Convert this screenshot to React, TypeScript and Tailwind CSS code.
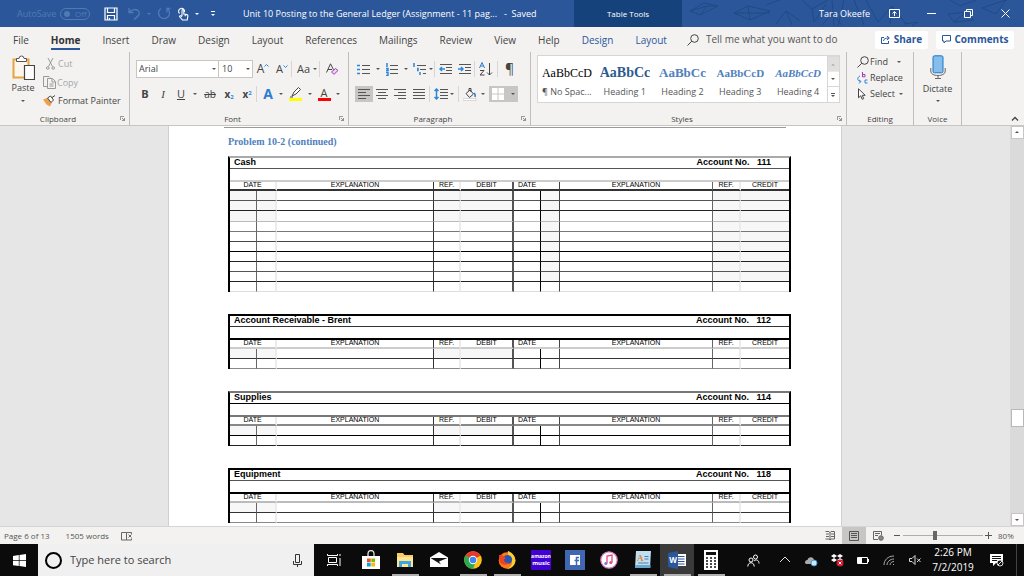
import type { ReactNode } from 'react';

const tabs = ['File', 'Home', 'Insert', 'Draw', 'Design', 'Layout', 'References', 'Mailings', 'Review', 'View', 'Help'];

const styles = [
  { name: '¶ No Spac...', sample: 'AaBbCcD', look: 'text-black text-[12px]' },
  { name: 'Heading 1', sample: 'AaBbCc', look: 'text-[#2e5b8f] text-[14px] font-bold' },
  { name: 'Heading 2', sample: 'AaBbCc', look: 'text-[#4f81bd] text-[13px] font-bold' },
  { name: 'Heading 3', sample: 'AaBbCcD', look: 'text-[#4f81bd] text-[11px] font-bold' },
  { name: 'Heading 4', sample: 'AaBbCcD', look: 'text-[#4f81bd] text-[11px] font-bold italic' },
];

export default function App() {
  return (
    <div className="flex h-screen flex-col overflow-hidden bg-[#f3f2f1] font-['Open_Sans',sans-serif] text-[#444]">
      <TitleBar />
      <TabRow />
      <Ribbon />
      <DocumentArea />
      <StatusBar />
      <Taskbar />
    </div>
  );
}

/* ───────────────────────── Title bar ───────────────────────── */

function TitleBar() {
  return (
    <header className="flex h-[27px] shrink-0 items-stretch bg-[#2b579a] text-[9px] text-white">
      <div className="flex w-[243px] shrink-0 items-center pl-[17px]">
        <label className="flex items-center gap-1 text-[#5179b5]">
          AutoSave
          <span className="flex h-3 w-[30px] items-center justify-around rounded-full border border-[#5179b5] text-[8px] leading-none">
            <input type="checkbox" className="size-[6px] appearance-none rounded-full bg-[#5179b5]" />
            Off
          </span>
        </label>
        <button aria-label="Save" className="ml-[14px]">
          <svg width="14" height="14" viewBox="0 0 14 14" fill="none" stroke="white" strokeWidth="1.2">
            <path d="M1 1h12v12H1zM3.5 1v4.5h7V1M3.5 13V8.5h7V13M5.5 11v2" />
          </svg>
        </button>
        <button aria-label="Undo" className="ml-[10px]">
          <svg width="13" height="13" viewBox="0 0 13 13" fill="none" stroke="#5179b5" strokeWidth="1.3">
            <path d="M1 1v4.5h4.5M1.2 5.2C4 2 9 1.5 10.8 4.5c1.5 3-.8 5-4.8 8" />
          </svg>
        </button>
        <Caret tone="text-[#5179b5]" width="w-4" />
        <button aria-label="Repeat">
          <svg width="14" height="13" viewBox="0 0 14 13" fill="none" stroke="#5179b5" strokeWidth="1.3">
            <path d="M4 1.5a5.5 5.5 0 1 0 6.5.3M10 5.5v-4h3.5" />
          </svg>
        </button>
        <button aria-label="Touch mode" className="ml-[6px]">
          <svg width="13" height="14" viewBox="0 0 13 14" fill="none" stroke="white" strokeWidth="1.1">
            <path d="M2.5 6.5a3 3 0 1 1 5-1.5M5 9V3.5a.9.9 0 0 1 1.8 0V7l3.2.6c.8.2 1 .6.9 1.3l-.7 4.1H5.5l-3-3.5c0-1 1.5-1 2.5.3M8.2 7.3v2" />
          </svg>
        </button>
        <Caret tone="text-white" width="w-[14px]" />
        <button aria-label="Customize toolbar" className="flex w-[18px] flex-col items-center gap-[2px]">
          <span className="h-px w-1 bg-white" />
          <Caret tone="text-white" width="w-1" />
        </button>
      </div>
      <h1 className="flex flex-1 items-center whitespace-pre">
        Unit 10 Posting to the General Ledger (Assignment - 11 pag...   -  Saved
      </h1>
      <div className="flex w-[108px] shrink-0 items-center justify-center bg-[#15427a] text-[8px]">Table Tools</div>
      <div className="relative flex w-[342px] shrink-0 items-center">
        <svg className="absolute inset-0" width="342" height="27" viewBox="0 0 342 27" fill="none" stroke="#204a86">
          <path d="M8 11 22 3l14 3-18 9zM8 11l17-5 11 0M18 15l7-9M52 13 66 6l22 5-20 9zM52 13h36M66 6l2 14M84 5l16-6M94 24l10-13 6 14M104 11l14 10M120 0l10 9 16-9M130 9l2 13 12-18M150 0l2 26M162 0l-6 26M172 0l10 25M184 0l12 22M196 22l14-16 14 18M210 6l-2 18M140 25l10-11 10 11M222 24l14-2-6 4M266 14l18-2-12 10zM284 12l8 8-20 2M268 0l10 6 16-6M300 8l24-8M300 8l14 6 10-14" />
        </svg>
        <span className="relative ml-auto pr-[6px]">Tara Okeefe</span>
        <div className="relative flex items-center">
          <WindowButton name="Ribbon display options" d="M.5.5h10v8H.5zM5.5 7V3M3.5 4.5l2-2 2 2" />
          <WindowButton name="Minimize" d="M1 4.5h9" />
          <WindowButton name="Restore" d="M1.5 2.5h6v6h-6zM3.5 2.5v-2h6v6h-2" />
          <WindowButton name="Close" d="m1.5.5 8 8M9.5.5l-8 8" />
        </div>
      </div>
    </header>
  );
}

function WindowButton({ name, d }: { name: string; d: string }) {
  return (
    <button aria-label={name} className="flex w-[37px] justify-center">
      <svg width="11" height="9" viewBox="0 0 11 9" fill="none" stroke="white">
        <path d={d} />
      </svg>
    </button>
  );
}

function Caret({ tone = 'text-[#555]', width = 'w-3' }: { tone?: string; width?: string }) {
  return (
    <span className={`flex shrink-0 justify-center ${width} ${tone}`}>
      <svg width="4" height="2" viewBox="0 0 4 2" fill="currentColor">
        <path d="M0 0h4L2 2z" />
      </svg>
    </span>
  );
}

/* ───────────────────────── Tabs ───────────────────────── */

function TabRow() {
  return (
    <nav className="flex h-[25px] shrink-0 items-center pr-[10px] pl-[13px] text-[10px]">
      <div className="flex gap-[22px]">
        {tabs.map((tab) => (
          <button
            key={tab}
            className={`h-5 border-b-2 pt-[3px] leading-[14px] ${tab === 'Home' ? 'border-[#2b579a] font-bold text-[#333]' : 'border-transparent'}`}
          >
            {tab}
          </button>
        ))}
        {['Design', 'Layout'].map((tab) => (
          <button key={tab} className="h-5 border-b-2 border-transparent pt-[3px] leading-[14px] text-[#2b579a]">
            {tab}
          </button>
        ))}
      </div>
      <label className="ml-5 flex flex-1 items-center gap-[7px]">
        <SearchIcon />
        <input
          className="w-full min-w-0 bg-transparent outline-none placeholder:text-[#555]"
          placeholder="Tell me what you want to do"
          aria-label="Tell me what you want to do"
        />
      </label>
      <button className="flex h-[18px] w-[53px] items-center justify-center gap-1 rounded-xs bg-white font-bold text-[#2b579a]">
        <svg width="9" height="9" viewBox="0 0 9 9" fill="none" stroke="currentColor">
          <path d="M3 2.5H.5v6h7V6M2.500 6C3 3.5 4.5 3 8 3M6 1l2.300 2L6 5" />
        </svg>
        Share
      </button>
      <button className="ml-2 flex h-[18px] w-[78px] items-center justify-center gap-1 rounded-xs bg-white font-bold text-[#2b579a]">
        <svg width="9" height="9" viewBox="0 0 9 9" fill="none" stroke="currentColor">
          <path d="M.5.5h8V6H4L2 8V6H.5z" />
        </svg>
        Comments
      </button>
    </nav>
  );
}

function SearchIcon() {
  return (
    <svg className="shrink-0" width="12" height="12" viewBox="0 0 12 12" fill="none" stroke="#444">
      <circle cx="7.5" cy="4.5" r="3.8" />
      <path d="M4.8 7.2.5 11.5" />
    </svg>
  );
}

/* ───────────────────────── Ribbon ───────────────────────── */

function Ribbon() {
  return (
    <div className="flex h-[74px] shrink-0 border-b border-[#c8c6c4] text-[9px]">
      <Group name="Clipboard" width="w-[130px]" launcher>
        <div className="flex pt-[3px]">
          <button className="flex w-[46px] flex-col items-center">
            <PasteIcon />
            <span className="mt-px leading-3">Paste</span>
            <span className="mt-[6px]"><Caret /></span>
          </button>
          <div className="flex flex-col">
            <button className="flex h-[18px] items-center gap-[3px] text-[#a6a6a6]">
              <svg width="9" height="12" viewBox="0 0 9 12" fill="none" stroke="#999">
                <path d="m2 0 4.5 8.5M7 0 2.5 8.5" />
                <circle cx="1.8" cy="10" r="1.3" />
                <circle cx="7.2" cy="10" r="1.3" />
              </svg>
              Cut
            </button>
            <button className="-ml-[3px] flex h-[19px] items-center gap-px text-[#a6a6a6]">
              <svg width="13" height="13" viewBox="0 0 13 13" fill="none" stroke="#999">
                <path d="M4 10.5H.5V.5H6l1 1M4.5 2.5h5l3 3v7h-8zM9 3v3h3M6.5 8h4M6.5 10h4" />
              </svg>
              Copy
            </button>
            <button className="-ml-[3px] flex h-[18px] items-center gap-[2px]">
              <svg width="13" height="12" viewBox="0 0 13 12">
                <path d="M0 4.5 4 3l5 4-2 4.5-3.5-2z" fill="#f0a04b" />
                <path d="m4.5 3 3-2 3 4L8 7.5zM9 2.5l3-2" fill="white" stroke="#444" />
              </svg>
              Format Painter
            </button>
          </div>
        </div>
      </Group>

      <Group name="Font" width="w-[219px]" launcher>
        <div className="flex h-[34px] items-center pl-[6px]">
          <label className="relative flex items-center">
            <select aria-label="Font" className="h-[18px] w-[83px] appearance-none border border-[#c8c6c4] bg-white pl-[2px] text-[9px]">
              <option>Arial</option>
            </select>
            <span className="pointer-events-none absolute right-0"><Caret width="w-[10px]" /></span>
          </label>
          <label className="relative -ml-px flex items-center">
            <select aria-label="Font size" className="h-[18px] w-[35px] appearance-none border border-[#c8c6c4] bg-white pl-[3px] text-[9px]">
              <option>10</option>
            </select>
            <span className="pointer-events-none absolute right-0"><Caret width="w-[10px]" /></span>
          </label>
          <button aria-label="Grow font" className="flex w-5 justify-center text-[12px]">
            A<svg className="mt-1" width="5" height="3" viewBox="0 0 5 3" fill="none" stroke="#2b88d8"><path d="m.5 2.5 2-2 2 2" /></svg>
          </button>
          <button aria-label="Shrink font" className="flex w-[18px] justify-center text-[11px]">
            A<svg className="mt-1" width="5" height="3" viewBox="0 0 5 3" fill="none" stroke="#2b88d8"><path d="m.5.5 2 2 2-2" /></svg>
          </button>
          <Divider />
          <button className="pl-[5px] text-[11px]">Aa</button>
          <Caret width="w-[9px]" />
          <Divider />
          <button aria-label="Clear formatting" className="pl-[6px]">
            <svg width="13" height="12" viewBox="0 0 13 12" fill="none" stroke="#444">
              <path d="m.5 9.500 4-8.700 3 6M2 6.500h4" />
              <path d="m5.500 9 4-3.500 2.500 2-4 3.800z" stroke="#a33fb5" fill="#ecd4f0" />
            </svg>
          </button>
        </div>
        <div className="flex h-4 items-center pl-[6px] text-[11px]">
          <button className="w-[18px] font-bold">B</button>
          <button className="w-[18px] font-['Liberation_Serif',serif] italic">I</button>
          <button className="w-[18px] underline">U</button>
          <Caret width="w-[10px]" />
          <button className="w-5 text-[10px] line-through">ab</button>
          <button className="w-[18px] text-[10px] font-bold">x<sub className="text-[6px] text-[#2b88d8]">2</sub></button>
          <button className="w-[18px] text-[10px] font-bold">x<sup className="text-[6px] text-[#2b88d8]">2</sup></button>
          <Divider />
          <button className="w-[22px] text-[14px] leading-none font-bold text-[#2b7cd3]">A</button>
          <Caret width="w-1" />
          <button aria-label="Highlight color" className="flex w-6 justify-center">
            <svg width="13" height="14" viewBox="0 0 13 14">
              <path d="m3 9 2-4L9.500.5l2 2L7 7zM1 10h3" fill="white" stroke="#444" />
              <path d="M0 11h13v3H0z" fill="#ffff00" />
            </svg>
          </button>
          <Caret width="w-[6px]" />
          <button className="flex w-[22px] flex-col items-center leading-[10px]">
            A
            <span className="h-[3px] w-[13px] bg-[#f00]" />
          </button>
          <Caret width="w-[6px]" />
        </div>
      </Group>

      <Group name="Paragraph" width="w-[182px]" launcher>
        <div className="flex h-[34px] items-center pl-[8px]">
          <LineIcon d="M5 2.500h8M5 6.500h8M5 10.500h8" accent="M0 2.500h3M0 6.500h3M0 10.500h3" name="Bullets" />
          <Caret width="w-[14px]" />
          <LineIcon d="M5 2.500h8M5 6.500h8M5 10.500h8" accent="M2 0v4M1 5.500h2v2H1M1 9.500h2v3H1" name="Numbering" />
          <Caret width="w-[14px]" />
          <LineIcon d="M4 2.500h9M7 6.500h6M10 10.500h3" accent="M1 0v4M4 5.500h1v2H4M7 9v3" name="Multilevel list" />
          <Caret width="w-[7px]" />
          <Divider />
          <span className="w-1" />
          <LineIcon d="M1 1.500h12M7 4.500h6M7 7.500h6M1 10.500h12" accent="M1 6h5M3 4 1 6l2 2" name="Decrease indent" />
          <span className="w-[5px]" />
          <LineIcon d="M1 1.500h12M7 4.500h6M7 7.500h6M1 10.500h12" accent="M0 6h5M3 4l2 2-2 2" name="Increase indent" />
          <span className="w-[2px]" />
          <Divider />
          <button aria-label="Sort" className="mx-1">
            <svg width="14" height="14" viewBox="0 0 14 14" fill="none">
              <path d="M.5 6 3 .5 5.500 6M1.500 4h3" stroke="#2b7cd3" />
              <path d="M1 8.500h4L1 13h4.500M10.500 1v12M8 10.500l2.500 2.500 2.500-2.500" stroke="#444" />
            </svg>
          </button>
          <Divider />
          <button className="w-[23px] text-[14px] leading-none">¶</button>
        </div>
        <div className="flex h-4 items-center pl-[6px]">
          <span className="flex h-4 w-[18px] items-center justify-center bg-[#c8c6c4]">
            <LineIcon d="M1 1.500h12M1 4.500h8M1 7.500h12M1 10.500h8" name="Align left" />
          </span>
          <span className="flex w-[18px] justify-center"><LineIcon d="M1 1.500h12M3 4.500h8M1 7.500h12M3 10.500h8" name="Center" /></span>
          <span className="flex w-[18px] justify-center"><LineIcon d="M1 1.500h12M5 4.500h8M1 7.500h12M5 10.500h8" name="Align right" /></span>
          <span className="flex w-5 justify-center"><LineIcon d="M1 1.500h12M1 4.500h12M1 7.500h12M1 10.500h12" name="Justify" /></span>
          <Divider />
          <span className="w-1" />
          <LineIcon d="M6 1.500h8M6 4.500h8M6 7.500h8M6 10.500h8" accent="M2.500 1v10M.5 3l2-2 2 2M.5 9l2 2 2-2" name="Line spacing" />
          <Caret width="w-[8px]" />
          <span className="w-[2px]" />
          <Divider />
          <button aria-label="Shading" className="ml-1">
            <svg width="14" height="13" viewBox="0 0 14 13" fill="none" stroke="#444">
              <path d="M3 5.500 7 2l3.500 4-4 3.500zM6 3V.5h2V4" />
              <path d="M11 5c1.500 1 1.500 2 1 4" stroke="#2b7cd3" strokeWidth="1.5" />
              <path d="M0 10.500h13v2H0z" fill="white" stroke="#bbb" strokeWidth=".5" />
            </svg>
          </button>
          <Caret width="w-[12px]" />
          <button aria-label="Borders" className="flex h-4 w-[29px] items-center justify-between bg-[#c8c6c4] pl-[3px]">
            <svg width="12" height="12" viewBox="0 0 12 12" fill="white">
              <path d="M0 0h5.500v5.500H0zM6.500 0H12v5.500H6.500zM0 6.500h5.500V12H0zM6.500 6.500H12V12H6.500z" />
            </svg>
            <Caret width="w-[11px]" />
          </button>
        </div>
      </Group>

      <Group name="Styles" width="w-[316px]" launcher>
        <div className="mt-[3px] ml-[6px] flex h-12 w-[303px] border border-[#d8d6d4] bg-white">
          {styles.map((s) => (
            <button key={s.name} className="flex w-[58px] flex-col items-center overflow-hidden pt-2">
              <span className={`h-[18px] w-[50px] overflow-hidden text-center font-['Liberation_Serif',serif] leading-[18px] whitespace-nowrap ${s.look}`}>
                {s.sample}
              </span>
              <span className="mt-1 leading-3 whitespace-nowrap text-[#555]">{s.name}</span>
            </button>
          ))}
          <div className="flex w-3 flex-col divide-y divide-[#d8d6d4] border-l border-[#d8d6d4]">
            <button aria-label="Previous styles" className="flex-1 rotate-180 bg-[#e1dfdd]"><Caret tone="text-[#a6a6a6]" width="w-[11px]" /></button>
            <button aria-label="Next styles" className="flex-1"><Caret width="w-[11px]" /></button>
            <button aria-label="More styles" className="flex flex-1 flex-col items-center justify-center gap-px">
              <span className="h-px w-1 bg-[#555]" />
              <Caret width="w-[11px]" />
            </button>
          </div>
        </div>
      </Group>

      <Group name="Editing" width="w-[67px]">
        <div className="flex flex-col pt-[2px] pl-[10px]">
          <button className="flex h-4 items-center gap-px">
            <SearchIcon />
            Find
            <Caret width="w-5" />
          </button>
          <button className="flex h-4 items-center gap-[2px]">
            <svg width="11" height="12" viewBox="0 0 11 12" fill="none">
              <path d="M5.500 0v5M5.500 2.500H8v2.300H5.500" stroke="#a33fb5" />
              <path d="M3 4C0 5 0 9 3.500 9.500M2 8l2 1.500-2 2M10.500 8H8v3h2.500" stroke="#2b88d8" />
            </svg>
            Replace
          </button>
          <button className="flex h-4 items-center gap-1 pl-px">
            <svg width="8" height="12" viewBox="0 0 8 12" fill="white" stroke="#444">
              <path d="M.5.8v9l2.200-2 1.500 3.500 1.500-.7-1.500-3.300h3z" />
            </svg>
            Select
            <Caret width="w-1" />
          </button>
        </div>
      </Group>

      <Group name="Voice" width="w-12">
        <button className="flex w-full flex-col items-center pt-[3px]">
          <svg width="16" height="24" viewBox="0 0 16 24" fill="none" stroke="#666">
            <path d="M.8 13v3c0 3 3 4.500 7.200 4.500s7.200-1.500 7.200-4.500v-3M8 20.500v3M5 23.500h6" />
            <rect x="3" y=".8" width="10" height="17" rx="1.5" fill="#83beec" stroke="#1e74c4" />
          </svg>
          <span className="mt-1 leading-3">Dictate</span>
          <span className="mt-[5px]"><Caret /></span>
        </button>
      </Group>

      <div className="flex flex-1 items-end justify-end pr-[5px] pb-[3px]">
        <button aria-label="Collapse the ribbon">
          <svg width="8" height="6" viewBox="0 0 8 6" fill="none" stroke="#444" strokeWidth="1.3">
            <path d="m1 4.500 3-3 3 3" />
          </svg>
        </button>
      </div>
    </div>
  );
}

function Group({ name, width, launcher, children }: { name: string; width: string; launcher?: boolean; children: ReactNode }) {
  return (
    <section className={`flex shrink-0 flex-col border-r border-[#c0bebc] ${width}`}>
      <div className="flex-1">{children}</div>
      <footer className="flex h-[13px] items-center text-[8px]">
        <span className={`flex-1 text-center ${launcher ? '-mr-[9px] pr-[13px]' : ''}`}>{name}</span>
        {launcher && (
          <button aria-label={`${name} settings`} className="w-[9px]">
            <svg width="5" height="5" viewBox="0 0 5 5" fill="none" stroke="#777" strokeWidth=".8">
              <path d="M.4 4V.4H4M2 2l2.500 2.500V2M4.500 4.500H2" />
            </svg>
          </button>
        )}
      </footer>
    </section>
  );
}

function PasteIcon() {
  return (
    <svg width="24" height="26" viewBox="0 0 24 26">
      <path d="M2.500 4.500h15v18h-15z" fill="#fbf6ee" stroke="#e8a33d" strokeWidth="2" />
      <path d="M5.500 3.500H8a2.500 2.500 0 0 1 5 0h2.500v3h-10z" fill="white" stroke="#555" />
      <path d="M13.500 10.500h10v14h-10z" fill="white" stroke="#444" strokeWidth="1.2" />
    </svg>
  );
}

function Divider() {
  return <span className="h-4 w-px shrink-0 bg-[#d8d6d4]" />;
}

function LineIcon({ d, accent, name }: { d: string; accent?: string; name: string }) {
  return (
    <button aria-label={name} className="shrink-0">
      <svg width="14" height="13" viewBox="0 0 14 13" fill="none">
        <path d={d} stroke="#555" />
        {accent && <path d={accent} stroke="#2b88d8" strokeWidth="1.5" />}
      </svg>
    </button>
  );
}

/* ───────────────────────── Document ───────────────────────── */

const accounts = [
  {
    title: 'Cash',
    no: '111',
    top: 'border-t-[#aaa]',
    titleRule: 'border-b-[#555]',
    headRule: 'border-b-[#ccc]',
    bodyRule: 'border-b-[#333]',
    rows: [
      'border-b-[#555]',
      'border-b-[#222]',
      'border-b-[#bbb]',
      'border-b-[#777]',
      'border-b-[#444]',
      'border-b-black',
      'border-b-[#222]',
      'border-b-[#555]',
      'border-b-[#222]',
      'border-b-[#ddd]',
    ],
  },
  {
    title: 'Account Receivable - Brent',
    no: '112',
    top: 'border-t-black',
    titleRule: 'border-b-[#333]',
    headRule: 'border-b-black',
    bodyRule: 'border-b-[#ccc]',
    rows: ['border-b-[#333]', 'border-b-[#888]'],
  },
  {
    title: 'Supplies',
    no: '114',
    top: 'border-t-[#777]',
    titleRule: 'border-b-black',
    headRule: 'border-b-[#777]',
    bodyRule: 'border-b-[#888]',
    rows: ['border-b-black', 'border-b-[#222]'],
  },
  {
    title: 'Equipment',
    no: '118',
    top: 'border-t-black',
    titleRule: 'border-b-[#555]',
    headRule: 'border-b-black',
    bodyRule: 'border-b-[#bbb]',
    rows: ['border-b-[#333]', 'border-b-[#888]'],
  },
];

const columns = [
  { width: 'w-[27px]', edge: 'border-r border-r-[#666]', shade: 'left' },
  { width: 'w-[20px]', edge: 'border-r-2 border-r-[#ececec]', shade: 'left' },
  { width: 'w-[157px]', edge: 'border-r border-r-[#333]', shade: '' },
  { width: 'w-[27px]', edge: 'border-r-2 border-r-[#ececec]', shade: 'left' },
  { width: 'w-[53px]', edge: 'border-r-2 border-r-[#555]', shade: 'left' },
  { width: 'w-[27px]', edge: 'border-r border-r-black', shade: '' },
  { width: 'w-[19px]', edge: 'border-r border-r-[#444]', shade: 'right' },
  { width: 'w-[153px]', edge: 'border-r border-r-[#666]', shade: '' },
  { width: 'w-[28px]', edge: 'border-r-2 border-r-[#ececec]', shade: 'right' },
  { width: 'w-[48px]', edge: '', shade: 'right' },
];

const heads = [
  { label: 'DATE', span: 2, edge: 'border-r-2 border-r-[#ececec]' },
  { label: 'EXPLANATION', span: 1, edge: 'border-r border-r-[#333]' },
  { label: 'REF.', span: 1, edge: 'border-r-2 border-r-[#ececec]' },
  { label: 'DEBIT', span: 1, edge: 'border-r-2 border-r-[#555]' },
  { label: 'DATE', span: 2, edge: 'border-r border-r-[#444]' },
  { label: 'EXPLANATION', span: 1, edge: 'border-r border-r-[#666]' },
  { label: 'REF.', span: 1, edge: 'border-r-2 border-r-[#ececec]' },
  { label: 'CREDIT', span: 1, edge: '' },
];

function DocumentArea() {
  return (
    <main className="flex min-h-0 flex-1 bg-[#e6e6e6]">
      <div className="flex-1 overflow-hidden">
        <article className="mx-auto h-full w-[674px] overflow-hidden border-x border-[#d0d0d0] bg-white pl-[59px]">
          <div className="-ml-1 h-[2px] w-[562px] border-b border-[#999]" />
          <h2 className="mt-2 font-['Liberation_Serif',serif] text-[10px] leading-3 font-bold text-[#4f81bd]">
            Problem 10-2 (continued)
          </h2>
          <div className="mt-2 space-y-[22px]">
            {accounts.map((a) => (
              <Ledger key={a.no} account={a} />
            ))}
          </div>
        </article>
      </div>
      <div className="flex w-[14px] flex-col items-center bg-[#dadada]">
        <button aria-label="Scroll up" className="flex h-[13px] w-[13px] rotate-180 items-center border border-[#c8c6c4] bg-white">
          <Caret width="w-[11px]" />
        </button>
        <div className="flex flex-1 flex-col">
          <div className="flex-[270]" />
          <div className="h-[18px] w-[13px] border border-[#b8b8b8] bg-white" />
          <div className="flex-[86]" />
        </div>
        <button aria-label="Scroll down" className="flex h-[13px] w-[13px] items-center border border-[#c8c6c4] bg-white">
          <Caret width="w-[11px]" />
        </button>
      </div>
    </main>
  );
}

function Ledger({ account }: { account: (typeof accounts)[number] }) {
  const { title, no, top, titleRule, headRule, bodyRule, rows } = account;
  const isLong = rows.length > 2;

  const isShaded = (shade: string, row: number) => {
    if (shade === 'left') return row < (isLong ? 3 : 1);
    return shade === 'right' && isLong && row < rows.length - 1;
  };

  return (
    <table
      className={`w-[563px] table-fixed border-separate border-spacing-0 border-x-2 border-t-2 border-x-black font-['Liberation_Sans',sans-serif] text-black ${top}`}
    >
      <colgroup>
        {columns.map((c, i) => (
          <col key={i} className={c.width} />
        ))}
      </colgroup>
      <thead>
        <tr className="h-[11px] text-left align-top text-[9px] leading-[8px]">
          <th colSpan={5} className={`border-b p-0 pl-1 ${titleRule}`}>{title}</th>
          <th colSpan={5} className={`border-b p-0 pr-[18px] text-right whitespace-pre ${titleRule}`}>Account No.   {no}</th>
        </tr>
        <tr className="h-[13px]">
          <td colSpan={10} className={`border-b-2 p-0 ${headRule}`} />
        </tr>
        <tr className="h-[9px] align-top text-[7px] leading-[6px]">
          {heads.map((h, i) => (
            <th
              key={i}
              colSpan={h.span}
              className={`border-b-2 p-0 font-normal ${bodyRule} ${h.edge} ${i === 4 ? 'pl-1 text-left' : 'text-center'}`}
            >
              {h.label}
            </th>
          ))}
        </tr>
      </thead>
      <tbody>
        {rows.map((rule, r) => (
          <tr key={r} className={r === 2 ? 'h-[11px]' : 'h-[10px]'}>
            {columns.map((c, i) => (
              <td key={i} className={`border-b p-0 ${rule} ${c.edge} ${isShaded(c.shade, r) ? 'bg-[#f7f7f7]' : ''}`} />
            ))}
          </tr>
        ))}
      </tbody>
    </table>
  );
}

/* ───────────────────────── Status bar ───────────────────────── */

function StatusBar() {
  return (
    <footer className="flex h-[18px] shrink-0 items-center border-t border-[#d8d6d4] text-[8px] text-[#555]">
      <span className="pl-1">Page 6 of 13</span>
      <span className="pl-4">1505 words</span>
      <button aria-label="Proofing" className="ml-3">
        <svg width="12" height="10" viewBox="0 0 12 10" fill="none" stroke="#666">
          <path d="M5.500 1.500V9M5.500 1.500h-5V9h5M5.500 1.500h5V3M5.500 9h5V7.500M7.500 3.500l3 3M10.500 3.500l-3 3" />
        </svg>
      </button>
      <div className="ml-auto flex h-full items-center">
        <button aria-label="Read mode" className="flex h-full w-6 items-center justify-center">
          <svg width="10" height="9" viewBox="0 0 10 9" fill="none" stroke="#666">
            <path d="M5 1v8M.5.5H4l1 1 1-1h3.500V8H6L5 9 4 8H.5M1 3h3M1 5.500h3M6 3h3M6 5.500h3" />
          </svg>
        </button>
        <button aria-label="Print layout" className="flex h-full w-6 items-center justify-center bg-[#c8c6c4]">
          <svg width="10" height="10" viewBox="0 0 10 10" fill="none" stroke="#555">
            <path d="M.5.5h9v9h-9zM2 2.500h6M2 4.500h6M2 6.500h6" />
          </svg>
        </button>
        <button aria-label="Web layout" className="flex h-full w-6 items-center justify-center">
          <svg width="11" height="10" viewBox="0 0 11 10" fill="none" stroke="#666">
            <path d="M5 8.500H.5v-8h8V4M2 2.500h5M2 4.500h3" />
            <circle cx="8" cy="7" r="2.3" fill="#888" />
          </svg>
        </button>
        <button aria-label="Zoom out" className="mr-[2px] ml-1 w-[7px]">
          <span className="block h-px w-[6px] bg-[#555]" />
        </button>
        <input
          type="range"
          aria-label="Zoom"
          min={10}
          max={170}
          defaultValue={74}
          className="h-[9px] w-20 appearance-none bg-[linear-gradient(#b0aeac,#b0aeac)] bg-[length:100%_1px] bg-center bg-no-repeat [&::-webkit-slider-thumb]:h-[9px] [&::-webkit-slider-thumb]:w-1 [&::-webkit-slider-thumb]:appearance-none [&::-webkit-slider-thumb]:bg-[#666]"
        />
        <button aria-label="Zoom in" className="ml-[2px]">
          <svg width="7" height="7" viewBox="0 0 7 7" stroke="#555"><path d="M0 3.500h7M3.500 0v7" /></svg>
        </button>
        <span className="w-8 pl-[6px]">80%</span>
      </div>
    </footer>
  );
}

/* ───────────────────────── Taskbar ───────────────────────── */

const apps: { name: string; open?: boolean; active?: boolean; icon: ReactNode }[] = [
  {
    name: 'Store',
    icon: (
      <>
        <path d="M1 6h18v13H1z" fill="white" />
        <path d="M7 6V3.500a3 3 0 0 1 6 0V6" stroke="#ddd" strokeWidth="1.3" />
        <path d="M6 8.500h3.700v3.700H6z" fill="#f25022" />
        <path d="M10.300 8.500H14v3.700h-3.700z" fill="#7fba00" />
        <path d="M6 12.800h3.700v3.700H6z" fill="#00a4ef" />
        <path d="M10.300 12.800H14v3.700h-3.700z" fill="#ffb900" />
      </>
    ),
  },
  {
    name: 'File Explorer',
    open: true,
    icon: (
      <>
        <path d="M2 3h6l1.500 2H18v12H2z" fill="#f7cf60" />
        <path d="M2 7h16v10H2z" fill="#ffe594" />
        <path d="M4 17v-6h12v6h-3v-3H7v3z" fill="#3ea6e0" />
      </>
    ),
  },
  {
    name: 'Mail',
    icon: (
      <>
        <path d="M1 7.500 10 2l9 5.500V17H1z" fill="white" />
        <path d="M1.500 8h17L10 11.500l2 3z" fill="#111" />
      </>
    ),
  },
  {
    name: 'Chrome',
    open: true,
    icon: (
      <>
        <circle cx="10" cy="10" r="8.8" fill="#fbc116" />
        <path d="M10 10 2.400 5.600a8.800 8.800 0 0 1 15.200 0z" fill="#e33b2e" />
        <path d="M2.400 5.600A8.800 8.800 0 0 0 10 18.800L13 11z" fill="#2da94f" />
        <path d="M2.400 5.600 10 4h7z" fill="#e33b2e" />
        <circle cx="10" cy="10" r="4.2" fill="white" />
        <circle cx="10" cy="10" r="3.3" fill="#4285f4" />
      </>
    ),
  },
  {
    name: 'Firefox',
    open: true,
    icon: (
      <>
        <circle cx="10" cy="10.5" r="8.3" fill="#ff7a18" />
        <path d="M11 1c3 1 7.500 4 7.500 10-1 5-5 8-9 8 6-2 7-8 4-11-2-2-3-4-2.500-7z" fill="#ffcf2e" />
        <circle cx="10.5" cy="9.5" r="4.6" fill="#2456b8" />
        <path d="M2 5c2 0 4 0 5 1.500L9 8 7 9.500c0 3 3 4 5.500 3-2 3-8 3.500-10-1z" fill="#f0441f" />
      </>
    ),
  },
  {
    name: 'Amazon Music',
    icon: (
      <>
        <path d="M0 0h20v20H0z" fill="#4201d3" />
        <text x="10" y="8" fontSize="5" fontWeight="700" textAnchor="middle" fill="white">amazon</text>
        <text x="10" y="15" fontSize="6" fontWeight="700" textAnchor="middle" fill="white">music</text>
      </>
    ),
  },
  {
    name: 'Facebook',
    icon: (
      <>
        <path d="M0 0h20v20H0z" fill="#4267b2" />
        <path d="M5 5h10v10H5z" fill="white" />
        <path d="M11.500 15V7.500H14M9.500 10.500H14" stroke="#4267b2" strokeWidth="1.5" />
      </>
    ),
  },
  {
    name: 'iTunes',
    icon: (
      <>
        <circle cx="10" cy="10" r="8.2" fill="white" stroke="#d67fc0" strokeWidth="1.2" />
        <path d="M8 13.500V6l5-1v7.500" stroke="#e8467c" strokeWidth="1.3" />
        <circle cx="6.8" cy="13.5" r="1.5" fill="#5a7cf0" />
        <circle cx="11.8" cy="12.5" r="1.5" fill="#e8467c" />
      </>
    ),
  },
  {
    name: 'WordPad',
    open: true,
    icon: (
      <>
        <path d="M3 1h15l-1 17H2z" fill="#bfe0f2" />
        <path d="M2 15h15.500v3H2z" fill="#6aa7cf" />
        <text x="4" y="11" fontSize="9" fontWeight="700" fontFamily="Liberation Serif" fill="#e8802f">A</text>
        <path d="M11.500 6.500h4M11.500 9h4M5 13h10.500" stroke="#4c7fa8" />
      </>
    ),
  },
  {
    name: 'Word',
    open: true,
    active: true,
    icon: (
      <>
        <path d="M9 4h10v12H9z" fill="white" />
        <path d="M11 6.500h6.500M11 9h6.500M11 11.500h6.500M11 14h6.500" stroke="#2b579a" />
        <path d="m1 3 10-2v18L1 17z" fill="#2b579a" />
        <text x="6" y="13" fontSize="8" fontWeight="700" textAnchor="middle" fill="white">W</text>
      </>
    ),
  },
  {
    name: 'Calculator',
    open: true,
    icon: (
      <>
        <path d="M3 0h14v20H3z" fill="white" />
        <path d="M5 2h10v3H5z" fill="#111" />
        <path d="M5 8h2M9 8h2M13 8h2M5 11h2M9 11h2M13 11h2M5 14h2M9 14h2M13 14h2M5 17h2M9 17h2M13 17h2" stroke="#111" strokeWidth="1.5" />
      </>
    ),
  },
];

const tray = [
  { name: 'Show hidden icons', icon: <path d="m2 9 5-5 5 5" stroke="#ddd" /> },
  {
    name: 'OneDrive',
    icon: (
      <>
        <path d="M1 10c0-3 2-3 2.500-3C4 4 9 3 10 7c3 0 3 4 0 4H2z" fill="#aaa" />
        <circle cx="10" cy="10" r="3" fill="#cde6f7" stroke="#3a96dd" />
      </>
    ),
  },
  {
    name: 'Dropbox',
    icon: (
      <>
        <path d="m4 1 3 2-3 2-3-2zM10 1l3 2-3 2-3-2zM4 5l3 2-3 2-3-2zM10 5l3 2-3 2-3-2z" fill="white" />
        <circle cx="10" cy="10" r="3.5" fill="#d4162c" />
        <path d="m8.700 8.700 2.600 2.600M11.300 8.700l-2.600 2.600" stroke="white" />
      </>
    ),
  },
  {
    name: 'Battery',
    icon: (
      <>
        <path d="M1.500 4.500h10v6h-10zM12.500 6v3" stroke="white" />
        <path d="M2 5h4v5H2z" fill="white" />
      </>
    ),
  },
  { name: 'Wi-Fi', icon: <path d="M2 12C2 7 6 3 12 3M5 12c0-3 3-6 7-6M8 12c0-2 2-3.500 4-3.500M11 12l1-1" stroke="#aaa" /> },
  { name: 'Volume', icon: <path d="M1.500 5.500H4l3-3v9l-3-3H1.500zM9 5.500 12.500 9M12.500 5.500 9 9" stroke="#ddd" /> },
];

function Taskbar() {
  return (
    <div className="flex h-8 shrink-0 items-stretch bg-[#0b0b0b] text-white">
      <button aria-label="Start" className="flex w-[38px] items-center justify-center">
        <svg width="13" height="13" viewBox="0 0 13 13" fill="white">
          <path d="m0 2 5.800-1v5.200H0zM6.500.9 13 0v6.200H6.500zM0 6.900h5.800v5.200L0 11.200zM6.500 6.900H13V13l-6.500-.9z" />
        </svg>
      </button>
      <label className="flex w-[276px] items-center bg-[#f0f0f0] pr-[12px] pl-[7px]">
        <span className="size-[17px] shrink-0 rounded-full border-2 border-black" />
        <input
          aria-label="Type here to search"
          placeholder="Type here to search"
          className="ml-2 w-full min-w-0 bg-transparent text-[11px] outline-none placeholder:text-[#444]"
        />
        <svg className="shrink-0" width="9" height="13" viewBox="0 0 9 13" fill="none" stroke="#333">
          <path d="M2.500.5h4v8h-4zM.5 7v3.500h8V7M4.500 10.500V13" />
        </svg>
      </label>
      <button aria-label="Task view" className="flex w-10 items-center justify-center">
        <svg width="14" height="12" viewBox="0 0 14 12" fill="none" stroke="white">
          <path d="M1.500 3.500h8v5h-8zM.5 0v1.500h10V0M.5 12v-1.500h10V12M13 0v2M13 4v8" />
        </svg>
      </button>
      {apps.map((app) => (
        <button
          key={app.name}
          aria-label={app.name}
          className={`flex w-[34px] flex-col items-center justify-between pt-[6px] ${app.active ? 'bg-[#3a3a3a]' : ''}`}
        >
          <svg width="20" height="20" viewBox="0 0 20 20" fill="none">{app.icon}</svg>
          <span className={`h-[2px] w-[27px] ${app.open ? 'bg-[#b0b0b0]' : ''}`} />
        </button>
      ))}
      <div className="ml-auto flex items-center">
        <button aria-label="People" className="flex w-[38px] justify-center">
          <svg width="13" height="13" viewBox="0 0 13 13" fill="none" stroke="white">
            <circle cx="8.5" cy="3" r="2" />
            <circle cx="4" cy="6" r="2" />
            <path d="M.8 12.500c0-5 6.400-5 6.400 0M7 7c2-2 5-1 5 2.500" />
          </svg>
        </button>
        {tray.map((t) => (
          <button key={t.name} aria-label={t.name} className="flex w-[26px] justify-center">
            <svg width="14" height="14" viewBox="0 0 14 14" fill="none">{t.icon}</svg>
          </button>
        ))}
        <div className="w-[50px] text-center text-[10px] leading-[15px]">
          <div>2:26 PM</div>
          <div>7/2/2019</div>
        </div>
        <button aria-label="Notifications" className="flex w-[38px] justify-center">
          <svg width="14" height="14" viewBox="0 0 14 14">
            <path d="M0 1h13v9H6l-3 3v-3H0z" fill="white" />
            <path d="M2 3.500h9M2 5.500h9M2 7.500h5" stroke="#111" />
            <circle cx="10" cy="10" r="3" fill="#111" stroke="#ddd" />
            <path d="m8 12 4-4" stroke="#ddd" />
          </svg>
        </button>
        <span className="h-8 w-2 border-l border-[#444]" />
      </div>
    </div>
  );
}
